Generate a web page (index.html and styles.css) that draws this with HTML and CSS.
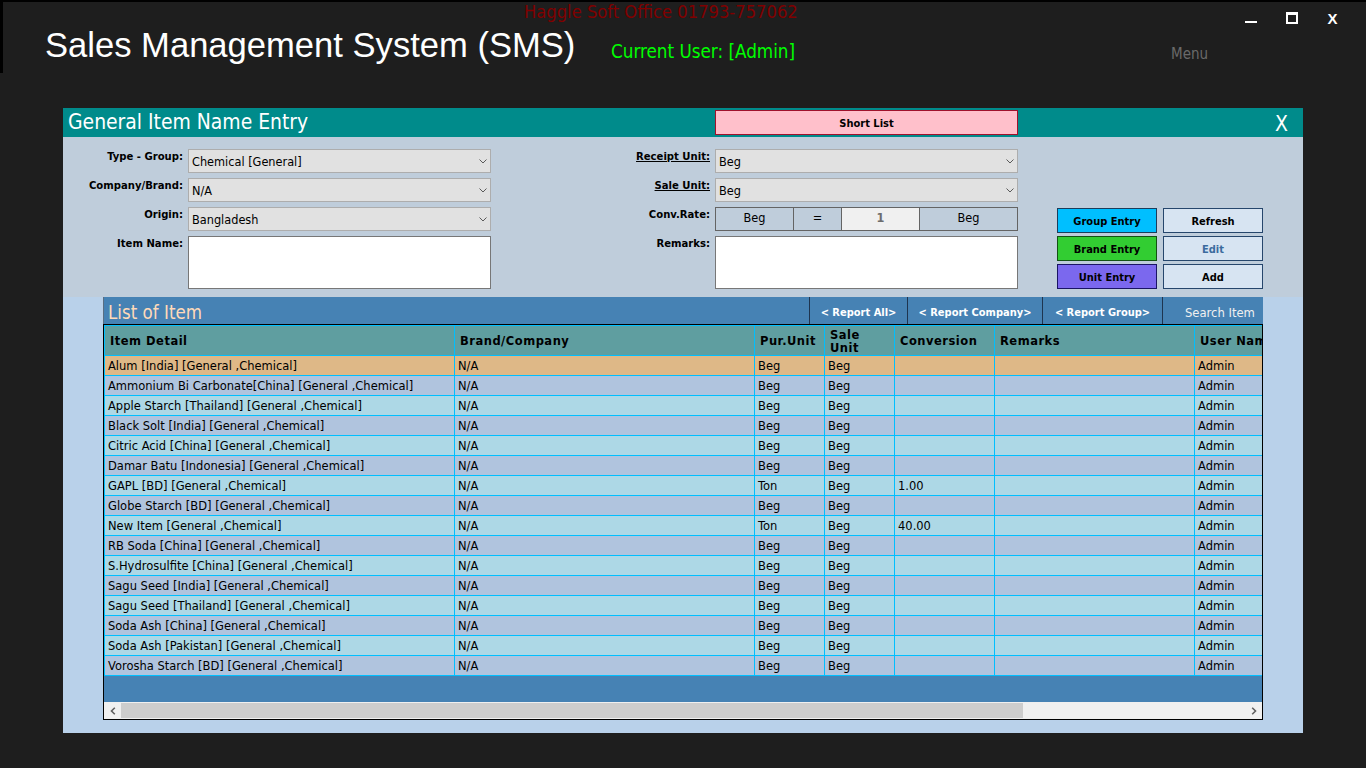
FILE: index.html
```html
<!DOCTYPE html>
<html>
<head>
<meta charset="utf-8">
<title>Sales Management System (SMS)</title>
<link rel="stylesheet" href="styles.css">
</head>
<body>
<div class="top">
  <div class="top-row1">
    <span class="haggle">Haggle Soft Office 01793-757062</span>
    <div class="winctl">
      <span class="wc-min"></span>
      <span class="wc-max"></span>
      <span class="wc-close">X</span>
    </div>
  </div>
  <div class="top-row2">
    <h1 class="app-title">Sales Management System (SMS)</h1>
    <span class="cur-user">Current User: [Admin]</span>
    <span class="menu">Menu</span>
  </div>
</div>

<main class="stage">
  <section class="dlg">
    <header class="dlg-head">
      <span class="dlg-title">General Item Name Entry</span>
      <button class="btn-short">Short List</button>
      <span class="dlg-close">X</span>
    </header>

    <div class="form">
      <label class="lbl c1">Type - Group:</label>
      <div class="combo c2"><span>Chemical [General]</span><svg class="chev" width="8" height="5" viewBox="0 0 8 5"><path d="M0.5 0.5 L4 4 L7.5 0.5" fill="none" stroke="#5a5a5a" stroke-width="1"/></svg></div>
      <label class="lbl c3"><u>Receipt Unit:</u></label>
      <div class="combo c4"><span>Beg</span><svg class="chev" width="8" height="5" viewBox="0 0 8 5"><path d="M0.5 0.5 L4 4 L7.5 0.5" fill="none" stroke="#5a5a5a" stroke-width="1"/></svg></div>

      <label class="lbl c1">Company/Brand:</label>
      <div class="combo c2"><span>N/A</span><svg class="chev" width="8" height="5" viewBox="0 0 8 5"><path d="M0.5 0.5 L4 4 L7.5 0.5" fill="none" stroke="#5a5a5a" stroke-width="1"/></svg></div>
      <label class="lbl c3"><u>Sale Unit:</u></label>
      <div class="combo c4"><span>Beg</span><svg class="chev" width="8" height="5" viewBox="0 0 8 5"><path d="M0.5 0.5 L4 4 L7.5 0.5" fill="none" stroke="#5a5a5a" stroke-width="1"/></svg></div>

      <label class="lbl c1">Origin:</label>
      <div class="combo c2"><span>Bangladesh</span><svg class="chev" width="8" height="5" viewBox="0 0 8 5"><path d="M0.5 0.5 L4 4 L7.5 0.5" fill="none" stroke="#5a5a5a" stroke-width="1"/></svg></div>
      <label class="lbl c3">Conv.Rate:</label>
      <div class="conv c4"><span>Beg</span><span>=</span><span class="num">1</span><span>Beg</span></div>

      <div class="btns">
        <button class="btn btn-group">Group Entry</button>
        <button class="btn">Refresh</button>
        <button class="btn btn-brand">Brand Entry</button>
        <button class="btn btn-edit">Edit</button>
        <button class="btn btn-unit">Unit Entry</button>
        <button class="btn">Add</button>
      </div>

      <label class="lbl c1">Item Name:</label>
      <div class="tbox c2"></div>
      <label class="lbl c3">Remarks:</label>
      <div class="tbox c4"></div>
    </div>

    <div class="listarea">
      <div class="list">
        <div class="list-head">
          <span class="list-title">List of Item</span>
          <button class="rpt rpt-all">&lt; Report All&gt;</button>
          <button class="rpt rpt-co">&lt; Report Company&gt;</button>
          <button class="rpt rpt-gr">&lt; Report Group&gt;</button>
          <span class="search">Search Item</span>
        </div>
        <div class="gwrap">
          <div class="tbl">
            <div class="row hrow"><span>Item Detail</span><span>Brand/Company</span><span>Pur.Unit</span><span>Sale<br>Unit</span><span>Conversion</span><span>Remarks</span><span>User Name</span></div>
            <div class="row sel"><span>Alum [India] [General ,Chemical]</span><span>N/A</span><span>Beg</span><span>Beg</span><span></span><span></span><span>Admin</span></div>
            <div class="row even"><span>Ammonium Bi Carbonate[China] [General ,Chemical]</span><span>N/A</span><span>Beg</span><span>Beg</span><span></span><span></span><span>Admin</span></div>
            <div class="row odd"><span>Apple Starch [Thailand] [General ,Chemical]</span><span>N/A</span><span>Beg</span><span>Beg</span><span></span><span></span><span>Admin</span></div>
            <div class="row even"><span>Black Solt [India] [General ,Chemical]</span><span>N/A</span><span>Beg</span><span>Beg</span><span></span><span></span><span>Admin</span></div>
            <div class="row odd"><span>Citric Acid [China] [General ,Chemical]</span><span>N/A</span><span>Beg</span><span>Beg</span><span></span><span></span><span>Admin</span></div>
            <div class="row even"><span>Damar Batu [Indonesia] [General ,Chemical]</span><span>N/A</span><span>Beg</span><span>Beg</span><span></span><span></span><span>Admin</span></div>
            <div class="row odd"><span>GAPL [BD] [General ,Chemical]</span><span>N/A</span><span>Ton</span><span>Beg</span><span>1.00</span><span></span><span>Admin</span></div>
            <div class="row even"><span>Globe Starch [BD] [General ,Chemical]</span><span>N/A</span><span>Beg</span><span>Beg</span><span></span><span></span><span>Admin</span></div>
            <div class="row odd"><span>New Item [General ,Chemical]</span><span>N/A</span><span>Ton</span><span>Beg</span><span>40.00</span><span></span><span>Admin</span></div>
            <div class="row even"><span>RB Soda [China] [General ,Chemical]</span><span>N/A</span><span>Beg</span><span>Beg</span><span></span><span></span><span>Admin</span></div>
            <div class="row odd"><span>S.Hydrosulfite [China] [General ,Chemical]</span><span>N/A</span><span>Beg</span><span>Beg</span><span></span><span></span><span>Admin</span></div>
            <div class="row even"><span>Sagu Seed [India] [General ,Chemical]</span><span>N/A</span><span>Beg</span><span>Beg</span><span></span><span></span><span>Admin</span></div>
            <div class="row odd"><span>Sagu Seed [Thailand] [General ,Chemical]</span><span>N/A</span><span>Beg</span><span>Beg</span><span></span><span></span><span>Admin</span></div>
            <div class="row even"><span>Soda Ash [China] [General ,Chemical]</span><span>N/A</span><span>Beg</span><span>Beg</span><span></span><span></span><span>Admin</span></div>
            <div class="row odd"><span>Soda Ash [Pakistan] [General ,Chemical]</span><span>N/A</span><span>Beg</span><span>Beg</span><span></span><span></span><span>Admin</span></div>
            <div class="row even"><span>Vorosha Starch [BD] [General ,Chemical]</span><span>N/A</span><span>Beg</span><span>Beg</span><span></span><span></span><span>Admin</span></div>
          </div>
          <div class="gfill"></div>
          <div class="hscroll">
            <span class="sb-btn"><svg width="6" height="8" viewBox="0 0 6 8"><path d="M4.8 0.8 L1.5 4 L4.8 7.2" fill="none" stroke="#606060" stroke-width="1.6"/></svg></span>
            <span class="sb-thumb"></span>
            <span class="sb-btn sb-right"><svg width="6" height="8" viewBox="0 0 6 8"><path d="M1.2 0.8 L4.5 4 L1.2 7.2" fill="none" stroke="#606060" stroke-width="1.6"/></svg></span>
          </div>
        </div>
      </div>
    </div>
  </section>
</main>
</body>
</html>
```

FILE: styles.css
```css
:root {
  --ui: "DejaVu Sans Condensed", "DejaVu Sans", sans-serif;
  --grid: "DejaVu Sans", sans-serif;
}
* { box-sizing: border-box; }
html, body { margin: 0; padding: 0; }
body {
  width: 1366px;
  height: 768px;
  overflow: hidden;
  background: #1e1e1e;
  font-family: var(--ui);
  color: #000;
}
button { font-family: inherit; margin: 0; padding: 0; cursor: default; }

/* ---------- top bar ---------- */
.top {
  height: 73px;
  border-top: 2px solid #000;
  border-left: 3px solid #000;
}
.top-row1 { display: flex; height: 22px; }
.haggle {
  margin-left: 521px;
  font-size: 18.2px;
  line-height: 20px;
  color: #800000;
  white-space: nowrap;
}
.winctl {
  display: flex;
  align-items: flex-start;
  height: 12px;
  margin: 10px 28px 0 auto;
}
.wc-min { width: 12px; height: 2px; margin-top: 9px; background: #fff; }
.wc-max {
  width: 12px; height: 12px; margin-left: 29px;
  border: 2px solid #fff; border-top-width: 3px;
}
.wc-close {
  width: 11px; margin-left: 29px; margin-top: 1px;
  font: bold 15px/12px "Liberation Sans", Arial, sans-serif;
  color: #fff; text-align: center;
}
.top-row2 {
  display: grid;
  grid-template-columns: 566px 560px auto;
  align-items: start;
  height: 49px;
  padding-left: 42px;
}
.app-title {
  margin: 1px 0 0;
  font: normal 34.6px/40px "Liberation Sans", Arial, sans-serif;
  color: #fff;
  white-space: nowrap;
}
.cur-user {
  margin-top: 17px;
  font-size: 18.7px;
  line-height: 22px;
  color: #00ff00;
  white-space: nowrap;
}
.menu {
  margin-top: 21px;
  font-size: 15px;
  line-height: 18px;
  color: #6a6a6a;
}

/* ---------- dialog ---------- */
.stage { padding: 35px 0 0 63px; }
.dlg {
  width: 1240px;
  height: 625px;
  display: flex;
  flex-direction: column;
}
.dlg-head {
  flex: none;
  display: grid;
  grid-template-columns: 652px 303px 1fr;
  height: 29px;
  background: #008b8b;
}
.dlg-title {
  padding-left: 5px;
  font-size: 20.9px;
  line-height: 28px;
  color: #fff;
  white-space: nowrap;
}
.btn-short {
  margin-top: 2px;
  height: 25px;
  padding-top: 1px;
  background: #ffc0cb;
  border: 1px solid #a0122c;
  font-size: 11px;
  font-weight: bold;
  color: #000;
}
.dlg-close {
  justify-self: end;
  padding: 3px 15px 0 0;
  font-size: 21px;
  line-height: 26px;
  color: #fff;
}

/* ---------- form ---------- */
.form {
  flex: none;
  height: 160px;
  padding-top: 12px;
  background: #bfcddb;
  display: grid;
  grid-template-columns: 125px 303px 224px 303px 39px 206px;
  grid-template-rows: 24px 24px 24px 53px;
  row-gap: 5px;
  align-content: start;
}
.c1 { grid-column: 1; }
.c2 { grid-column: 2; }
.c3 { grid-column: 3; }
.c4 { grid-column: 4; }
.lbl {
  padding: 1px 5px 0 0;
  text-align: right;
  font-size: 11.2px;
  font-weight: bold;
  line-height: 13px;
  white-space: nowrap;
}
.combo {
  display: flex;
  justify-content: space-between;
  align-items: flex-start;
  height: 24px;
  padding: 3px 3px 0 3px;
  background: #e1e1e1;
  border: 1px solid #adadad;
  font-size: 12.6px;
  line-height: 18px;
  white-space: nowrap;
  overflow: hidden;
}
.chev { flex: none; margin-top: 6px; }
.conv {
  display: grid;
  grid-template-columns: 78px 48px 78px 1fr;
  border: 1px solid #646464;
  font-size: 12.6px;
  line-height: 20px;
  text-align: center;
}
.conv span { border-right: 1px solid #646464; }
.conv span:last-child { border-right: 0; }
.conv .num { background: #f0f0f0; color: #6d6d6d; font-weight: bold; }
.tbox { background: #fff; border: 1px solid #777; }

.btns {
  grid-column: 6;
  grid-row: 3 / span 2;
  display: grid;
  grid-template-columns: 100px 100px;
  grid-auto-rows: 25px;
  column-gap: 6px;
  row-gap: 3px;
  padding-top: 1px;
  align-content: start;
}
.btn {
  padding-top: 1px;
  font-size: 11px;
  font-weight: bold;
  color: #000;
  background: #d7e4f2;
  border: 1px solid #26466c;
}
.btn-group { background: #00bfff; border-color: #1c3d5c; }
.btn-brand { background: #32cd32; border-color: #145214; }
.btn-unit { background: #7b68ee; border-color: #1a1464; }
.btn-edit { color: #3b6b9e; }

/* ---------- list ---------- */
.listarea {
  flex: 1;
  background: #b9d1ea;
  padding-left: 40px;
}
.list { width: 1160px; }
.list-head {
  display: flex;
  height: 27px;
  background: #4682b4;
  border-left: 1px solid #5a6e82;
}
.list-title {
  margin-top: 5px;
  padding-left: 4px;
  font-size: 18.6px;
  line-height: 22px;
  color: #ffdab9;
  white-space: nowrap;
}
.rpt {
  height: 27px;
  padding-top: 4px;
  border: 0;
  border-left: 1px solid #1e3550;
  background: #4682b4;
  color: #fff;
  font-size: 11px;
  font-weight: bold;
  white-space: nowrap;
}
.rpt-all { width: 98px; margin-left: auto; }
.rpt-co { width: 135px; }
.rpt-gr { width: 120px; }
.search {
  width: 101px;
  padding: 2px 0 0 22px;
  border-left: 1px solid #1e3550;
  font-size: 12.9px;
  line-height: 27px;
  color: #f0f0f0;
  white-space: nowrap;
}

.gwrap {
  height: 396px;
  border: 1px solid #000;
  background: #4682b4;
  overflow: hidden;
  display: flex;
  flex-direction: column;
}
.tbl {
  flex: none;
  width: 1211px;
  border-top: 1px solid #00bfff;
  border-left: 1px solid #00bfff;
}
.row {
  display: grid;
  grid-template-columns: 350px 300px 70px 70px 100px 200px 120px;
  height: 20px;
}
.row > span {
  padding: 1px 0 0 3px;
  border-right: 1px solid #00bfff;
  border-bottom: 1px solid #00bfff;
  font: 11.5px/18px var(--grid);
  color: #000;
  white-space: nowrap;
  overflow: hidden;
}
.hrow { height: 30px; background: #5f9ea0; }
.hrow > span {
  display: flex;
  align-items: center;
  padding: 2px 0 0 5px;
  font-weight: bold;
  font-size: 11.5px;
  line-height: 13px;
  letter-spacing: 0.5px;
}
.odd { background: #add8e6; }
.even { background: #b0c4de; }
.sel { background: #deb887; }
.gfill { flex: 1; }

.hscroll {
  flex: none;
  height: 17px;
  display: flex;
  align-items: center;
  background: #f0f0f0;
}
.sb-btn {
  flex: none;
  width: 17px;
  height: 17px;
  display: flex;
  align-items: center;
  justify-content: center;
}
.sb-thumb {
  width: 902px;
  height: 15px;
  background: #cdcdcd;
}
.sb-right { margin-left: auto; }
```
